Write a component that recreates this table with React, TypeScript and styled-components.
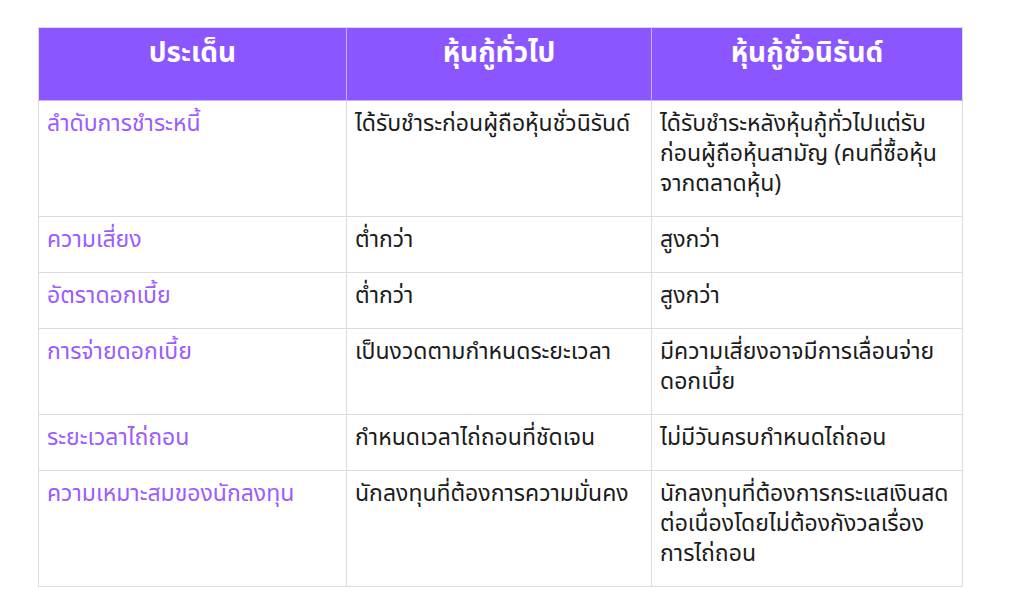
import React from 'react';
import styled, { createGlobalStyle } from 'styled-components';

const GlobalStyle = createGlobalStyle`
  html, body {
    margin: 0;
    padding: 0;
    background: #ffffff;
  }
  body {
    font-family: "Noto Sans Thai", "Noto Sans", "DejaVu Sans", sans-serif;
  }
`;

const Page = styled.div`
  width: 1024px;
  height: 612px;
  padding: 27px 0 0 38px;
  box-sizing: border-box;
`;

const Table = styled.table`
  width: 924px;
  border-collapse: collapse;
  table-layout: fixed;
  border: 1px solid #dcdcdc;
`;

const HeadCell = styled.th`
  height: 73px;
  box-sizing: border-box;
  padding: 6px 8px 0;
  vertical-align: top;
  background: #8b55ff;
  color: #ffffff;
  font-size: 28px;
  font-weight: 700;
  line-height: 40px;
  text-align: center;
  border-left: 1px solid #c8b0ff;
  border-bottom: 1px solid #c8b0ff;
  &:first-child {
    border-left: none;
  }
`;

const Cell = styled.td<{ $label?: boolean }>`
  padding: 8px 8px 17px;
  vertical-align: top;
  font-size: 23px;
  line-height: 30px;
  color: ${(p) => (p.$label ? '#9b5cff' : '#1c1c1c')};
  border: 1px solid #dcdcdc;
`;

const rows: [string, React.ReactNode, React.ReactNode][] = [
  [
    'ลำดับการชำระหนี้',
    'ได้รับชำระก่อนผู้ถือหุ้นชั่วนิรันด์',
    <>
      ได้รับชำระหลังหุ้นกู้ทั่วไปแต่รับ
      <br />
      ก่อนผู้ถือหุ้นสามัญ (คนที่ซื้อหุ้น
      <br />
      จากตลาดหุ้น)
    </>,
  ],
  ['ความเสี่ยง', 'ต่ำกว่า', 'สูงกว่า'],
  ['อัตราดอกเบี้ย', 'ต่ำกว่า', 'สูงกว่า'],
  [
    'การจ่ายดอกเบี้ย',
    'เป็นงวดตามกำหนดระยะเวลา',
    <>
      มีความเสี่ยงอาจมีการเลื่อนจ่าย
      <br />
      ดอกเบี้ย
    </>,
  ],
  ['ระยะเวลาไถ่ถอน', 'กำหนดเวลาไถ่ถอนที่ชัดเจน', 'ไม่มีวันครบกำหนดไถ่ถอน'],
  [
    'ความเหมาะสมของนักลงทุน',
    'นักลงทุนที่ต้องการความมั่นคง',
    <>
      นักลงทุนที่ต้องการกระแสเงินสด
      <br />
      ต่อเนื่องโดยไม่ต้องกังวลเรื่อง
      <br />
      การไถ่ถอน
    </>,
  ],
];

const App: React.FC = () => (
  <Page>
    <GlobalStyle />
    <Table>
      <colgroup>
        <col style={{ width: 308 }} />
        <col style={{ width: 305 }} />
        <col style={{ width: 311 }} />
      </colgroup>
      <thead>
        <tr>
          <HeadCell>ประเด็น</HeadCell>
          <HeadCell>หุ้นกู้ทั่วไป</HeadCell>
          <HeadCell>หุ้นกู้ชั่วนิรันด์</HeadCell>
        </tr>
      </thead>
      <tbody>
        {rows.map(([a, b, c]) => (
          <tr key={a}>
            <Cell $label>{a}</Cell>
            <Cell>{b}</Cell>
            <Cell>{c}</Cell>
          </tr>
        ))}
      </tbody>
    </Table>
  </Page>
);

export default App;
